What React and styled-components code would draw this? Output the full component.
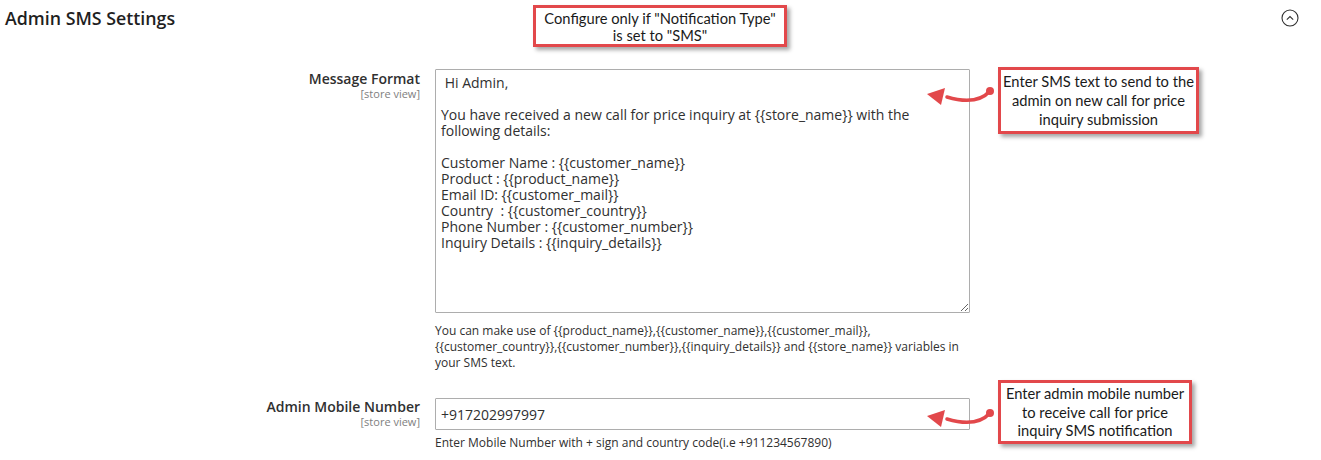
import React from "react";
import styled, { createGlobalStyle } from "styled-components";

const Global = createGlobalStyle`
  html, body { margin: 0; padding: 0; background: #fff; }
  body { font-family: "Open Sans", "Noto Sans", sans-serif; color: #303030; }
  * { box-sizing: border-box; }
`;

const RED = "#e2484b";

const Page = styled.div`
  width: 1321px;
  height: 460px;
  position: relative;
  overflow: hidden;
`;

const Header = styled.div`
  position: relative;
  display: flex;
  align-items: flex-start;
  justify-content: space-between;
  height: 36px;
  padding: 6px 22px 0 5px;
`;

const Title = styled.h2`
  margin: 0;
  font-size: 17.8px;
  line-height: 24px;
  font-weight: 600;
  color: #1f1f1f;
`;

const CollapseButton = styled.button`
  border: 0;
  background: none;
  padding: 0;
  margin-top: 3px;
  width: 18px;
  height: 18px;
  display: flex;
  cursor: pointer;
`;

const Callout = styled.div`
  width: ${(p) => p.$w}px;
  border: 3px solid ${RED};
  background: #fff;
  box-shadow: 3px 3px 4px rgba(0, 0, 0, 0.35);
  font-family: Lato, "Liberation Sans", sans-serif;
  font-size: 14.7px;
  line-height: ${(p) => p.$lh}px;
  color: #1a1a1a;
  text-align: center;
  padding: ${(p) => p.$pad};
  white-space: nowrap;
`;

const TopNote = styled.div`
  position: absolute;
  left: 533px;
  top: 5px;
`;

const Form = styled.div`
  display: grid;
  grid-template-columns: 420px 535px auto;
  column-gap: 15px;
  row-gap: 27px;
  margin-top: 33px;
`;

const LabelCell = styled.div`
  text-align: right;
  padding-top: ${(p) => p.$pt}px;
`;

const Label = styled.div`
  font-size: 14px;
  line-height: 18px;
  font-weight: 600;
  color: #303030;
`;

const Scope = styled.div`
  font-size: 11px;
  line-height: 12px;
  color: #808080;
`;

const Control = styled.div`
  display: flex;
  flex-direction: column;
`;

const TextArea = styled.textarea`
  width: 535px;
  height: 244px;
  border: 1px solid #adadad;
  border-radius: 1px;
  padding: 5px 5px;
  font-family: "Open Sans", sans-serif;
  font-size: 14px;
  line-height: 16px;
  color: #303030;
  resize: vertical;
  outline: none;
  overflow: hidden;
`;

const Input = styled.input`
  width: 535px;
  height: 32px;
  border: 1px solid #adadad;
  border-radius: 1px;
  padding: 0 5px;
  font-family: "Open Sans", sans-serif;
  font-size: 14px;
  color: #303030;
  outline: none;
`;

const Hint = styled.div`
  margin-top: ${(p) => p.$mt}px;
  font-size: 12px;
  line-height: 16px;
  color: #303030;
`;

const NoteCell = styled.div`
  position: relative;
  margin-left: 13px;
  margin-top: ${(p) => p.$mt}px;
  align-self: start;
`;

const ArrowSvg = styled.svg`
  position: absolute;
  left: -75px;
  top: ${(p) => p.$top}px;
  width: 72px;
  height: 30px;
  overflow: visible;
`;

const Arrow = ({ top }) => (
  <ArrowSvg $top={top} viewBox="0 0 72 30">
    <path
      d="M67 12 C58 22 44 24 24 18"
      fill="none"
      stroke={RED}
      strokeWidth="3.5"
      strokeLinecap="round"
    />
    <polygon points="4,15 22,9 18,26" fill={RED} />
    <circle cx="67" cy="12" r="4" fill={RED} />
  </ArrowSvg>
);

const messageText = ` Hi Admin,

You have received a new call for price inquiry at {{store_name}} with the following details:

Customer Name : {{customer_name}}
Product : {{product_name}}
Email ID: {{customer_mail}}
Country  : {{customer_country}}
Phone Number : {{customer_number}}
Inquiry Details : {{inquiry_details}}`;

export default function App() {
  return (
    <Page>
      <Global />
      <Header>
        <Title>Admin SMS Settings</Title>
        <TopNote>
          <Callout $w={254} $lh={17} $pad="2px 2px 0">
            Configure only if "Notification Type"
            <br />
            is set to "SMS"
          </Callout>
        </TopNote>
        <CollapseButton aria-label="collapse">
          <svg width="18" height="18" viewBox="0 0 18 18">
            <circle cx="9" cy="9" r="8" fill="none" stroke="#303030" strokeWidth="1.1" />
            <path d="M5.8 10.6 L9 7.6 L12.2 10.6" fill="none" stroke="#303030" strokeWidth="1.1" />
          </svg>
        </CollapseButton>
      </Header>

      <Form>
        <LabelCell $pt={1}>
          <Label>Message Format</Label>
          <Scope>[store view]</Scope>
        </LabelCell>
        <Control>
          <TextArea defaultValue={messageText} />
          <Hint $mt={10}>
            You can make use of {"{{product_name}},{{customer_name}},{{customer_mail}},"}
            <br />
            {"{{customer_country}},{{customer_number}},{{inquiry_details}} and {{store_name}} variables in"}
            <br />
            your SMS text.
          </Hint>
        </Control>
        <NoteCell $mt={-2}>
          <Arrow top={12} />
          <Callout $w={201} $lh={19} $pad="2px 2px">
            Enter SMS text to send to the
            <br />
            admin on new call for price
            <br />
            inquiry submission
          </Callout>
        </NoteCell>

        <LabelCell $pt={0}>
          <Label>Admin Mobile Number</Label>
          <Scope>[store view]</Scope>
        </LabelCell>
        <Control>
          <Input defaultValue="+917202997997" />
          <Hint $mt={5}>Enter Mobile Number with + sign and country code(i.e +911234567890)</Hint>
        </Control>
        <NoteCell $mt={-18}>
          <Arrow top={21} />
          <Callout $w={194} $lh={18.5} $pad="1px 2px">
            Enter admin mobile number
            <br />
            to receive call for price
            <br />
            inquiry SMS notification
          </Callout>
        </NoteCell>
      </Form>
    </Page>
  );
}
